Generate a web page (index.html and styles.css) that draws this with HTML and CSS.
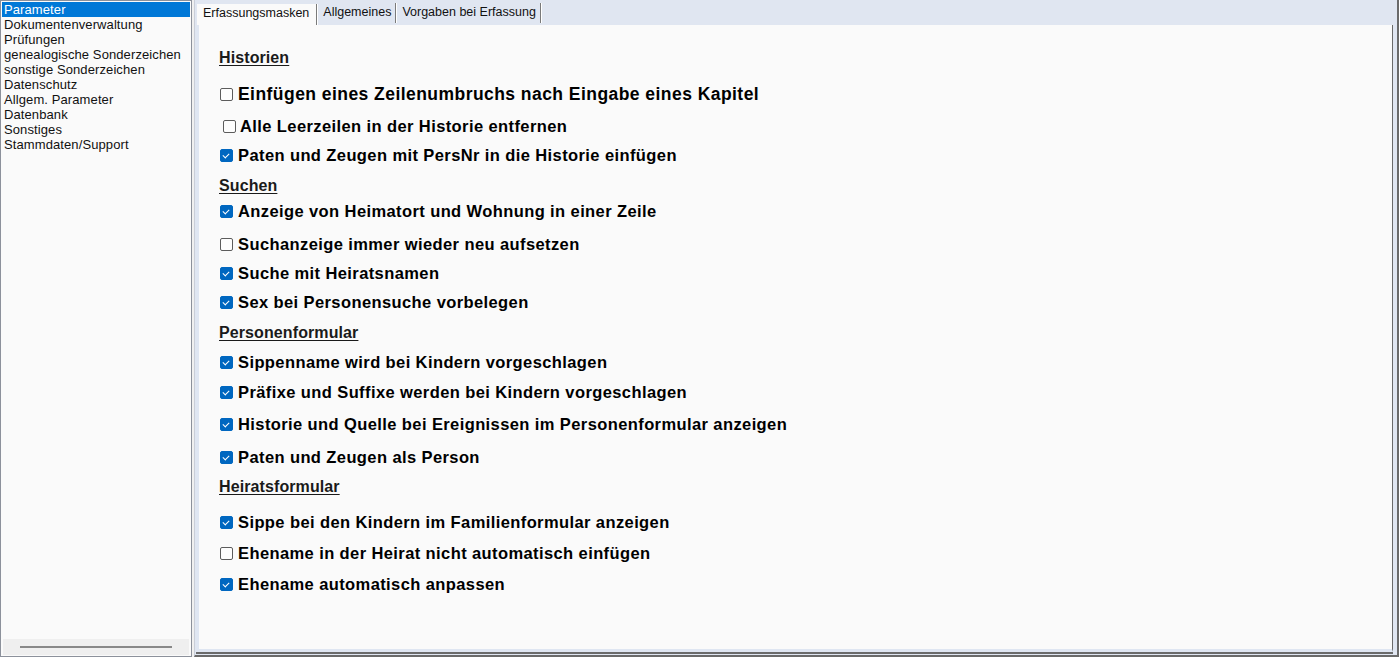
FILE: index.html
```html
<!DOCTYPE html>
<html lang="de">
<head>
    <meta charset="UTF-8">
    <title>Parameter</title>
    <link rel="stylesheet" href="styles.css">
</head>
<body>
<div class="app">
    <div class="sidebar">
        <ul class="tree">
            <li class="active">Parameter</li>
            <li>Dokumentenverwaltung</li>
            <li>Prüfungen</li>
            <li>genealogische Sonderzeichen</li>
            <li>sonstige Sonderzeichen</li>
            <li>Datenschutz</li>
            <li>Allgem. Parameter</li>
            <li>Datenbank</li>
            <li>Sonstiges</li>
            <li>Stammdaten/Support</li>
        </ul>
        <div class="hscroll"><div class="thumb"></div></div>
    </div>

    <div class="main">
        <div class="tabs">
            <div class="tab selected">Erfassungsmasken</div>
            <div class="tab">Allgemeines</div>
            <div class="tab">Vorgaben bei Erfassung</div>
        </div>
        <div class="page">
            <div class="section">Historien</div>
            <label class="row big sp17"><span class="cb"></span>Einfügen eines Zeilenumbruchs nach Eingabe eines Kapitel</label>
            <label class="row sp12 shifted"><span class="cb"></span>Alle Leerzeilen in der Historie entfernen</label>
            <label class="row sp9"><span class="cb on"></span>Paten und Zeugen mit PersNr in die Historie einfügen</label>

            <div class="section">Suchen</div>
            <label class="row sp6"><span class="cb on"></span>Anzeige von Heimatort und Wohnung in einer Zeile</label>
            <label class="row sp13"><span class="cb"></span>Suchanzeige immer wieder neu aufsetzen</label>
            <label class="row sp9"><span class="cb on"></span>Suche mit Heiratsnamen</label>
            <label class="row sp9"><span class="cb on"></span>Sex bei Personensuche vorbelegen</label>

            <div class="section">Personenformular</div>
            <label class="row"><span class="cb on"></span>Sippenname wird bei Kindern vorgeschlagen</label>
            <label class="row"><span class="cb on"></span>Präfixe und Suffixe werden bei Kindern vorgeschlagen</label>
            <label class="row sp12"><span class="cb on"></span>Historie und Quelle bei Ereignissen im Personenformular anzeigen</label>
            <label class="row sp13"><span class="cb on"></span>Paten und Zeugen als Person</label>

            <div class="section sp9">Heiratsformular</div>
            <label class="row sp16"><span class="cb on"></span>Sippe bei den Kindern im Familienformular anzeigen</label>
            <label class="row sp11"><span class="cb"></span>Ehename in der Heirat nicht automatisch einfügen</label>
            <label class="row sp11"><span class="cb on"></span>Ehename automatisch anpassen</label>
        </div>
    </div>
</div>
</body>
</html>
```

FILE: styles.css
```css
html, body {
    margin: 0;
    padding: 0;
}
body {
    font-family: "Liberation Sans", Arial, sans-serif;
    background-color: #f0f0f0;
    color: #000;
    width: 1399px;
    height: 657px;
    overflow: hidden;
}
.app {
    display: flex;
    height: 657px;
}

/* left tree */
.sidebar {
    width: 190px;
    height: 655px;
    border: 1px solid #8c919b;
    background-color: #fafafa;
    display: flex;
    flex-direction: column;
}
.tree {
    list-style: none;
    margin: 0;
    padding: 1px 1px 0 1px;
    flex: 1;
    font-size: 13px;
    letter-spacing: 0.1px;
}
.tree li {
    height: 15px;
    line-height: 15px;
    padding-left: 2px;
    color: #111;
}
.tree li.active {
    background-color: #0078d7;
    color: #fff;
}
.hscroll {
    height: 16px;
    margin: 0 2px 1px 2px;
    background-color: #efefef;
    display: flex;
    align-items: center;
}
.thumb {
    height: 2px;
    margin-left: 17px;
    width: 152px;
    background-color: #888;
}

/* right side */
.main {
    flex: 1;
    margin-left: 2px;
    border-left: 1px solid #c9ced8;
    border-right: 2px solid #6a6a6a;
    border-bottom: 2px solid #6a6a6a;
    background-color: #e0e6f1;
    display: flex;
    flex-direction: column;
}
.tabs {
    height: 25px;
    display: flex;
    align-items: flex-end;
    padding-left: 2px;
    font-size: 12.5px;
}
.tab {
    height: 20px;
    line-height: 19px;
    padding: 0 4px 0 5px;
    color: #111;
    border-right: 1px solid #7a7a7a;
    box-shadow: 1px 0 0 #fff;
    margin-right: 1px;
    margin-bottom: 2px;
}
.tab.selected {
    height: 21px;
    margin-bottom: 0;
    padding: 0 7px 0 6px;
    background-color: #fafafa;
}
.page {
    flex: 1;
    margin: 0 4px 3px 1px;
    background-color: #fafafa;
    border-left: 3px solid #dfe6f2;
    border-bottom: 3px solid #dfe6f2;
    border-right: 1px solid #6a6a6a;
    box-shadow: 0 2px 0 #6a6a6a;
    padding: 23px 0 0 20px;
    display: flex;
    flex-direction: column;
}
.section {
    height: 20px;
    line-height: 20px;
    margin-top: 10px;
    font-size: 16px;
    font-weight: bold;
    letter-spacing: 0.1px;
    text-decoration: underline;
    text-underline-offset: 2px;
    color: #1a1a1a;
    align-self: flex-start;
}
.section:first-child {
    margin-top: 0;
}
.row {
    box-sizing: border-box;
    height: 20px;
    line-height: 18px;
    padding-bottom: 2px;
    margin-top: 10px;
    display: flex;
    align-items: center;
    font-size: 16.5px;
    font-weight: bold;
    letter-spacing: 0.4px;
    padding-left: 1px;
}
.row.big {
    font-size: 17.5px;
    letter-spacing: 0.45px;
}
.row.shifted {
    padding-left: 4px;
}
.row.shifted .cb {
    margin-right: 4px;
}
.sp6 { margin-top: 6px; }
.sp9 { margin-top: 9px; }
.sp11 { margin-top: 11px; }
.sp12 { margin-top: 12px; }
.sp13 { margin-top: 13px; }
.sp16 { margin-top: 16px; }
.sp17 { margin-top: 17px; }

.cb {
    width: 11px;
    height: 11px;
    border: 1px solid #5c5c5c;
    border-radius: 2px;
    background-color: #fdfdfd;
    margin-right: 5px;
    flex-shrink: 0;
    position: relative;
}
.cb.on {
    background-color: #0067c0;
    border-color: #0067c0;
}
.cb.on::after {
    content: "";
    position: absolute;
    left: 3px;
    top: 2px;
    width: 3px;
    height: 5px;
    border: solid #fff;
    border-width: 0 1px 1px 0;
    transform: rotate(45deg);
}
```
